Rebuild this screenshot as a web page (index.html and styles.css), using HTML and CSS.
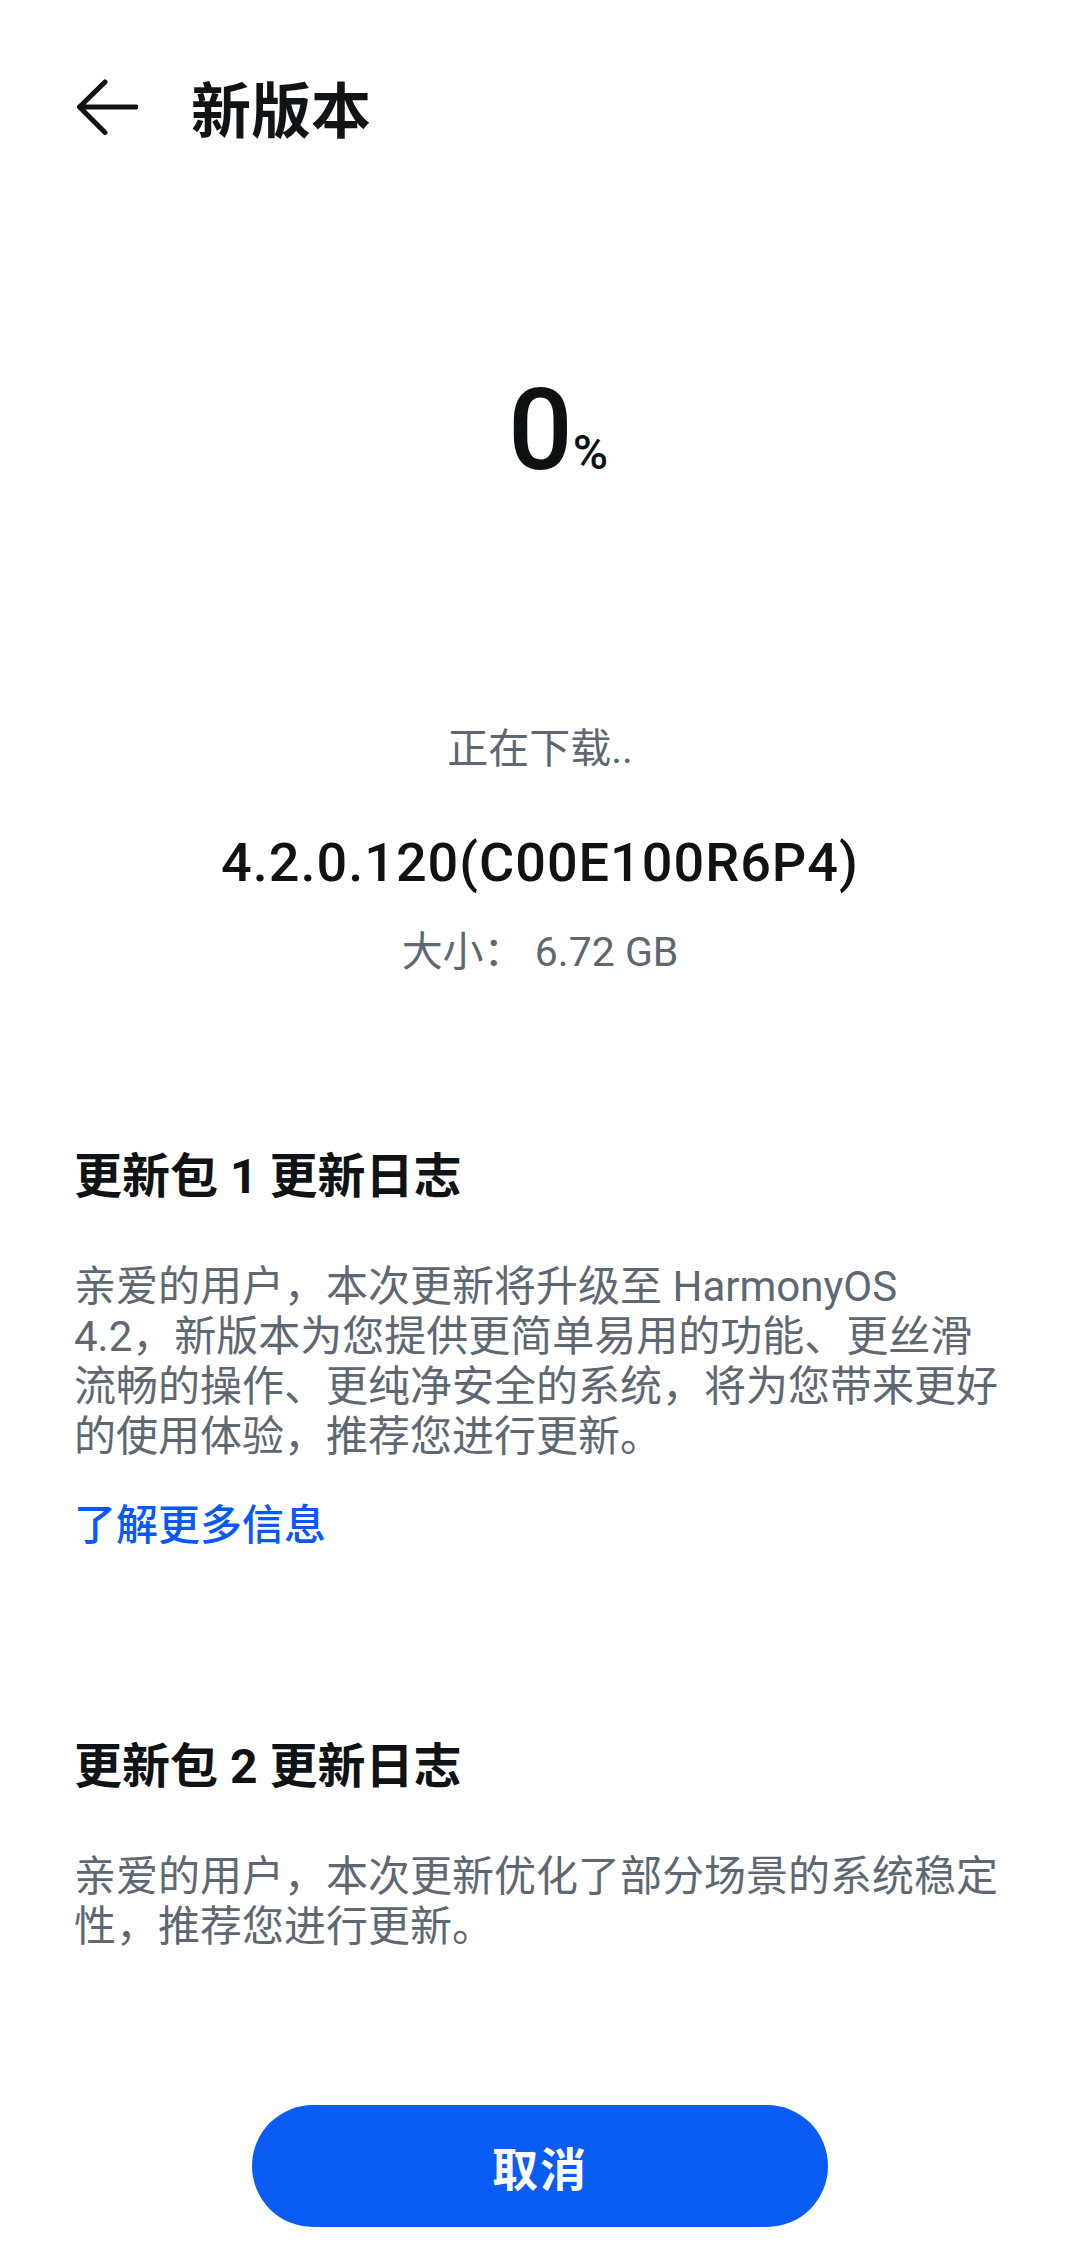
FILE: index.html
```html
<!DOCTYPE html>
<html lang="zh-CN">
<head>
<meta charset="utf-8">
<title>新版本</title>
<link rel="stylesheet" href="styles.css">
</head>
<body>
<div class="page">
  <header class="header">
    <svg class="back" width="62" height="58" viewBox="0 0 62 58" aria-hidden="true">
      <path d="M60 29 H4 M29 4 L3.5 29 L29 54.5" fill="none" stroke="#111" stroke-width="5" stroke-linecap="round" stroke-linejoin="round"/>
    </svg>
    <h1 class="title">新版本</h1>
  </header>

  <div class="progress"><span class="num">0</span><span class="pct">%</span></div>
  <div class="status">正在下载..</div>
  <div class="version">4.2.0.120(C00E100R6P4)</div>
  <div class="size">大小： 6.72 GB</div>

  <section class="log first">
    <h2 class="log-title">更新包 1 更新日志</h2>
    <p class="log-text">亲爱的用户，本次更新将升级至 HarmonyOS 4.2，新版本为您提供更简单易用的功能、更丝滑流畅的操作、更纯净安全的系统，将为您带来更好的使用体验，推荐您进行更新。</p>
    <a class="more" href="#">了解更多信息</a>
  </section>

  <section class="log second">
    <h2 class="log-title">更新包 2 更新日志</h2>
    <p class="log-text">亲爱的用户，本次更新优化了部分场景的系统稳定性，推荐您进行更新。</p>
  </section>

  <footer class="footer">
    <button class="cancel" type="button">取消</button>
  </footer>
</div>
</body>
</html>
```

FILE: styles.css
```css
* { box-sizing: border-box; }

html, body {
  margin: 0;
  padding: 0;
  background: #ffffff;
}

body {
  font-family: "Roboto", "Noto Sans CJK SC", "Noto Sans", sans-serif;
  color: #111417;
}

.page {
  min-height: 2266px;
  display: flex;
  flex-direction: column;
}

.header {
  height: 214px;
  display: flex;
  align-items: center;
  padding-left: 76px;
}

.back {
  display: block;
  flex: none;
}

.title {
  margin: 0 0 0 53px;
  font-size: 60px;
  line-height: 70px;
  font-weight: 700;
  color: #111417;
  font-family: "Noto Sans CJK SC", sans-serif;
}

.progress {
  margin-top: 151px;
  height: 130px;
  line-height: 130px;
  text-align: center;
  padding-left: 36px;
  color: #0d1114;
  font-weight: 500;
  white-space: nowrap;
}

.num {
  font-size: 114px;
}

.pct {
  font-size: 48px;
  margin-left: 0;
}

.status {
  margin-top: 229px;
  font-size: 41px;
  line-height: 50px;
  text-align: center;
  color: #5d6873;
}

.version {
  margin-top: 57px;
  font-size: 54px;
  line-height: 64px;
  letter-spacing: 1px;
  font-weight: 500;
  text-align: center;
  color: #0f1316;
}

.size {
  margin-top: 32px;
  font-size: 41px;
  line-height: 50px;
  text-align: center;
  color: #5d6873;
}

.log {
  padding: 0 74px;
  display: flex;
  flex-direction: column;
  align-items: flex-start;
}

.log.first { margin-top: 170px; }
.log.second { margin-top: 186px; }

.log-title {
  margin: 0;
  font-size: 48px;
  line-height: 60px;
  font-weight: 700;
  color: #0f1316;
}

.log-text {
  margin: 55px 0 0;
  font-size: 42px;
  line-height: 50px;
  color: #5d6873;
  width: 100%;
}

.more {
  margin-top: 39px;
  font-size: 42px;
  line-height: 50px;
  font-weight: 500;
  color: #0a59f7;
  text-decoration: none;
}

.footer {
  margin-top: auto;
  padding-bottom: 39px;
  display: flex;
  justify-content: center;
}

.cancel {
  width: 576px;
  height: 122px;
  border: none;
  border-radius: 61px;
  background: #0a5cf5;
  color: #ffffff;
  font-family: "Noto Sans CJK SC", sans-serif;
  font-size: 46px;
  font-weight: 700;
  letter-spacing: 2px;
  padding: 0;
}
```
